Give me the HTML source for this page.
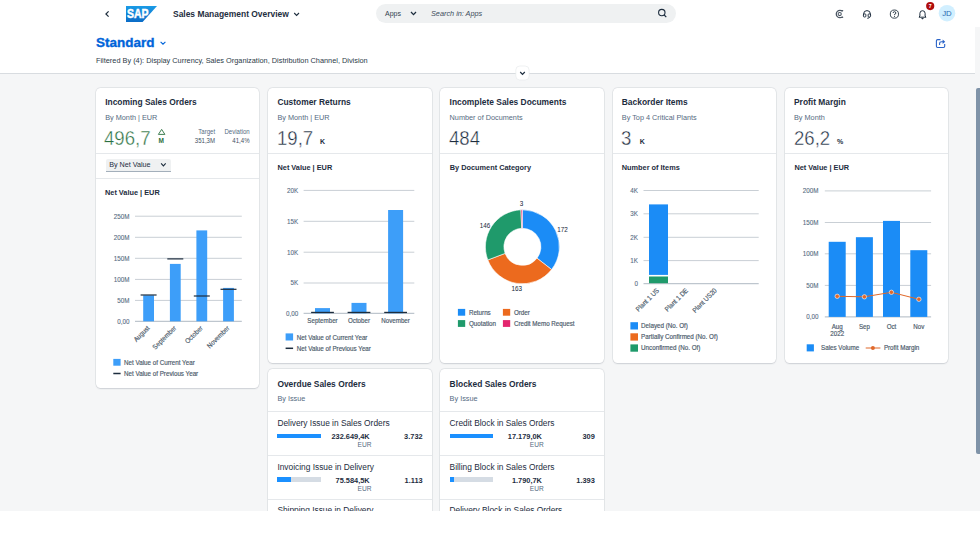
<!DOCTYPE html>
<html><head><meta charset="utf-8"><title>Sales Management Overview</title>
<style>
html,body{margin:0;padding:0;}
body{width:980px;height:551px;position:relative;overflow:hidden;background:#fff;font-family:"Liberation Sans",sans-serif;}
.t{position:absolute;line-height:0;white-space:nowrap;}
.card{position:absolute;background:#fff;border-radius:4.5px;box-shadow:0 0 0 0.5px rgba(34,53,72,0.1),0 0.5px 1.5px rgba(34,53,72,0.14);}
svg{position:absolute;left:0;top:0;overflow:visible;}
svg text{font-family:"Liberation Sans",sans-serif;}
#clip{position:absolute;left:0;top:0;width:980px;height:511px;overflow:hidden;}
</style></head><body>
<div id="clip">
<div style="position:absolute;left:0.00px;top:27.00px;width:975.00px;height:484.00px;background:#f5f6f7;"></div>
<div style="position:absolute;left:975.00px;top:27.00px;width:5.00px;height:484.00px;background:#f5f6f7;"></div>
<div style="position:absolute;left:0.00px;top:27.00px;width:975.00px;height:46.00px;background:#ffffff;"></div>
<div style="position:absolute;left:0.00px;top:73.00px;width:975.00px;height:1.00px;background:#d8dce0;"></div>
<div style="position:absolute;left:976.00px;top:88.00px;width:4.00px;height:366.00px;background:#7f93a8;border-radius:2px 0 0 2px;"></div>
<div class="card" style="left:96.00px;top:87.50px;width:163.40px;height:300.50px"></div>
<div class="card" style="left:268.20px;top:87.50px;width:163.40px;height:275.00px"></div>
<div class="card" style="left:440.40px;top:87.50px;width:163.40px;height:275.00px"></div>
<div class="card" style="left:612.60px;top:87.50px;width:163.40px;height:275.00px"></div>
<div class="card" style="left:784.80px;top:87.50px;width:163.40px;height:275.00px"></div>
<div class="card" style="left:268.20px;top:368.60px;width:163.40px;height:200.00px"></div>
<div class="card" style="left:440.40px;top:368.60px;width:163.40px;height:200.00px"></div>
<div style="position:absolute;left:96.00px;top:152.70px;width:163.40px;height:1.00px;background:#e5e8eb;"></div>
<div style="position:absolute;left:268.20px;top:152.70px;width:163.40px;height:1.00px;background:#e5e8eb;"></div>
<div style="position:absolute;left:440.40px;top:152.70px;width:163.40px;height:1.00px;background:#e5e8eb;"></div>
<div style="position:absolute;left:612.60px;top:152.70px;width:163.40px;height:1.00px;background:#e5e8eb;"></div>
<div style="position:absolute;left:784.80px;top:152.70px;width:163.40px;height:1.00px;background:#e5e8eb;"></div>
<div style="position:absolute;left:96.00px;top:177.80px;width:163.40px;height:1.00px;background:#e5e8eb;"></div>
<div style="position:absolute;left:268.20px;top:410.90px;width:163.40px;height:1.00px;background:#e5e8eb;"></div>
<div style="position:absolute;left:268.20px;top:454.80px;width:163.40px;height:1.00px;background:#e5e8eb;"></div>
<div style="position:absolute;left:268.20px;top:498.70px;width:163.40px;height:1.00px;background:#e5e8eb;"></div>
<div style="position:absolute;left:440.40px;top:410.90px;width:163.40px;height:1.00px;background:#e5e8eb;"></div>
<div style="position:absolute;left:440.40px;top:454.80px;width:163.40px;height:1.00px;background:#e5e8eb;"></div>
<div style="position:absolute;left:440.40px;top:498.70px;width:163.40px;height:1.00px;background:#e5e8eb;"></div>
<div style="position:absolute;left:376.00px;top:4.00px;width:299.50px;height:19.30px;background:#eff1f2;border-radius:9.65px;"></div>
<div class="t" style="left:173.00px;top:13.97px;font-size:8.45px;font-weight:700;color:#1d2d3e;">Sales Management Overview</div>
<div class="t" style="left:385.00px;top:13.67px;font-size:7px;font-weight:400;color:#32404f;">Apps</div>
<div class="t" style="left:431.00px;top:13.57px;font-size:7.3px;font-weight:400;color:#3d4c5c;font-style:italic;">Search in: Apps</div>
<div class="t" style="left:96.00px;top:42.62px;font-size:13.5px;font-weight:700;color:#0064d9;-webkit-text-stroke:0.35px #0064d9;">Standard</div>
<div class="t" style="left:96.00px;top:60.65px;font-size:7.35px;font-weight:400;color:#2c3a48;">Filtered By (4): Display Currency, Sales Organization, Distribution Channel, Division</div>
<div class="t" style="left:105.20px;top:102.08px;font-size:8.42px;font-weight:700;color:#1d2d3e;">Incoming Sales Orders</div>
<div class="t" style="left:105.20px;top:117.77px;font-size:7.3px;font-weight:400;color:#556b82;">By Month | EUR</div>
<div class="t" style="left:277.40px;top:102.08px;font-size:8.42px;font-weight:700;color:#1d2d3e;">Customer Returns</div>
<div class="t" style="left:277.40px;top:117.77px;font-size:7.3px;font-weight:400;color:#556b82;">By Month | EUR</div>
<div class="t" style="left:449.60px;top:102.08px;font-size:8.42px;font-weight:700;color:#1d2d3e;">Incomplete Sales Documents</div>
<div class="t" style="left:449.60px;top:117.77px;font-size:7.3px;font-weight:400;color:#556b82;">Number of Documents</div>
<div class="t" style="left:621.80px;top:102.08px;font-size:8.42px;font-weight:700;color:#1d2d3e;">Backorder Items</div>
<div class="t" style="left:621.80px;top:117.77px;font-size:7.3px;font-weight:400;color:#556b82;">By Top 4 Critical Plants</div>
<div class="t" style="left:794.00px;top:102.08px;font-size:8.42px;font-weight:700;color:#1d2d3e;">Profit Margin</div>
<div class="t" style="left:794.00px;top:117.77px;font-size:7.3px;font-weight:400;color:#556b82;">By Month</div>
<div class="t" style="left:104.10px;top:137.67px;font-size:20px;font-weight:400;color:#2a7040;-webkit-text-stroke:0.4px #fff;transform:scaleX(0.93);transform-origin:0 0;">496,7</div>
<div class="t" style="left:158.40px;top:140.95px;font-size:6.5px;font-weight:700;color:#2a7040;">M</div>
<div class="t" style="right:764.90px;top:131.91px;font-size:6.9px;font-weight:400;color:#556b82;transform:scaleX(0.88);transform-origin:100% 0;">Target</div>
<div class="t" style="right:764.90px;top:140.71px;font-size:6.9px;font-weight:400;color:#45525f;transform:scaleX(0.88);transform-origin:100% 0;">351,3M</div>
<div class="t" style="right:730.10px;top:131.91px;font-size:6.9px;font-weight:400;color:#556b82;transform:scaleX(0.88);transform-origin:100% 0;">Deviation</div>
<div class="t" style="right:730.10px;top:140.71px;font-size:6.9px;font-weight:400;color:#45525f;transform:scaleX(0.88);transform-origin:100% 0;">41,4%</div>
<div class="t" style="left:277.10px;top:137.67px;font-size:20px;font-weight:400;color:#1d2d3e;-webkit-text-stroke:0.4px #fff;transform:scaleX(0.93);transform-origin:0 0;">19,7</div>
<div class="t" style="left:320.00px;top:141.57px;font-size:7px;font-weight:700;color:#1d2d3e;">K</div>
<div class="t" style="left:449.00px;top:137.67px;font-size:20px;font-weight:400;color:#1d2d3e;-webkit-text-stroke:0.4px #fff;transform:scaleX(0.93);transform-origin:0 0;">484</div>
<div class="t" style="left:621.00px;top:137.67px;font-size:20px;font-weight:400;color:#1d2d3e;-webkit-text-stroke:0.4px #fff;transform:scaleX(0.93);transform-origin:0 0;">3</div>
<div class="t" style="left:639.70px;top:141.57px;font-size:7px;font-weight:700;color:#1d2d3e;">K</div>
<div class="t" style="left:793.60px;top:137.67px;font-size:20px;font-weight:400;color:#1d2d3e;-webkit-text-stroke:0.4px #fff;transform:scaleX(0.93);transform-origin:0 0;">26,2</div>
<div class="t" style="left:837.00px;top:141.57px;font-size:7px;font-weight:700;color:#1d2d3e;">%</div>
<div style="position:absolute;left:105.5px;top:158.6px;width:65.8px;height:12.3px;background:#eff1f2;border-bottom:1px solid #a3afbb;border-radius:2px 2px 0 0"></div>
<div class="t" style="left:109.20px;top:164.51px;font-size:7.2px;font-weight:400;color:#1d2d3e;">By Net Value</div>
<div class="t" style="left:105.00px;top:192.55px;font-size:7.35px;font-weight:700;color:#1d2d3e;">Net Value | EUR</div>
<div class="t" style="left:277.50px;top:167.85px;font-size:7.35px;font-weight:700;color:#1d2d3e;">Net Value | EUR</div>
<div class="t" style="left:449.80px;top:167.85px;font-size:7.35px;font-weight:700;color:#1d2d3e;">By Document Category</div>
<div class="t" style="left:621.80px;top:167.85px;font-size:7.35px;font-weight:700;color:#1d2d3e;">Number of Items</div>
<div class="t" style="left:794.40px;top:167.85px;font-size:7.35px;font-weight:700;color:#1d2d3e;">Net Value | EUR</div>
<div class="t" style="left:277.40px;top:384.28px;font-size:8.42px;font-weight:700;color:#1d2d3e;">Overdue Sales Orders</div>
<div class="t" style="left:277.40px;top:399.37px;font-size:7.3px;font-weight:400;color:#556b82;">By Issue</div>
<div class="t" style="left:277.40px;top:422.71px;font-size:8.35px;font-weight:400;color:#1d2d3e;">Delivery Issue in Sales Orders</div>
<div style="position:absolute;left:277.40px;top:433.60px;width:43.40px;height:4.80px;background:#d5dce4;"></div>
<div style="position:absolute;left:277.40px;top:433.60px;width:43.40px;height:4.80px;background:#1b90ff;"></div>
<div class="t" style="right:610.30px;top:436.94px;font-size:7.4px;font-weight:700;color:#1d2d3e;">232.649,4K</div>
<div class="t" style="right:608.50px;top:445.31px;font-size:6.6px;font-weight:400;color:#556b82;">EUR</div>
<div class="t" style="right:557.40px;top:436.94px;font-size:7.4px;font-weight:700;color:#1d2d3e;">3.732</div>
<div class="t" style="left:277.40px;top:466.51px;font-size:8.35px;font-weight:400;color:#1d2d3e;">Invoicing Issue in Delivery</div>
<div style="position:absolute;left:277.40px;top:477.40px;width:43.40px;height:4.80px;background:#d5dce4;"></div>
<div style="position:absolute;left:277.40px;top:477.40px;width:13.45px;height:4.80px;background:#1b90ff;"></div>
<div class="t" style="right:610.30px;top:480.74px;font-size:7.4px;font-weight:700;color:#1d2d3e;">75.584,5K</div>
<div class="t" style="right:608.50px;top:489.11px;font-size:6.6px;font-weight:400;color:#556b82;">EUR</div>
<div class="t" style="right:557.40px;top:480.74px;font-size:7.4px;font-weight:700;color:#1d2d3e;">1.113</div>
<div class="t" style="left:277.40px;top:510.31px;font-size:8.35px;font-weight:400;color:#1d2d3e;">Shipping Issue in Delivery</div>
<div style="position:absolute;left:277.40px;top:521.20px;width:43.40px;height:4.80px;background:#d5dce4;"></div>
<div style="position:absolute;left:277.40px;top:521.20px;width:8.68px;height:4.80px;background:#1b90ff;"></div>
<div class="t" style="right:610.30px;top:524.54px;font-size:7.4px;font-weight:700;color:#1d2d3e;"></div>
<div class="t" style="right:608.50px;top:532.91px;font-size:6.6px;font-weight:400;color:#556b82;">EUR</div>
<div class="t" style="right:557.40px;top:524.54px;font-size:7.4px;font-weight:700;color:#1d2d3e;"></div>
<div class="t" style="left:449.60px;top:384.28px;font-size:8.42px;font-weight:700;color:#1d2d3e;">Blocked Sales Orders</div>
<div class="t" style="left:449.60px;top:399.37px;font-size:7.3px;font-weight:400;color:#556b82;">By Issue</div>
<div class="t" style="left:449.60px;top:422.71px;font-size:8.35px;font-weight:400;color:#1d2d3e;">Credit Block in Sales Orders</div>
<div style="position:absolute;left:449.60px;top:433.60px;width:43.40px;height:4.80px;background:#d5dce4;"></div>
<div style="position:absolute;left:449.60px;top:433.60px;width:43.40px;height:4.80px;background:#1b90ff;"></div>
<div class="t" style="right:438.10px;top:436.94px;font-size:7.4px;font-weight:700;color:#1d2d3e;">17.179,0K</div>
<div class="t" style="right:436.30px;top:445.31px;font-size:6.6px;font-weight:400;color:#556b82;">EUR</div>
<div class="t" style="right:385.20px;top:436.94px;font-size:7.4px;font-weight:700;color:#1d2d3e;">309</div>
<div class="t" style="left:449.60px;top:466.51px;font-size:8.35px;font-weight:400;color:#1d2d3e;">Billing Block in Sales Orders</div>
<div style="position:absolute;left:449.60px;top:477.40px;width:43.40px;height:4.80px;background:#d5dce4;"></div>
<div style="position:absolute;left:449.60px;top:477.40px;width:4.34px;height:4.80px;background:#1b90ff;"></div>
<div class="t" style="right:438.10px;top:480.74px;font-size:7.4px;font-weight:700;color:#1d2d3e;">1.790,7K</div>
<div class="t" style="right:436.30px;top:489.11px;font-size:6.6px;font-weight:400;color:#556b82;">EUR</div>
<div class="t" style="right:385.20px;top:480.74px;font-size:7.4px;font-weight:700;color:#1d2d3e;">1.393</div>
<div class="t" style="left:449.60px;top:510.31px;font-size:8.35px;font-weight:400;color:#1d2d3e;">Delivery Block in Sales Orders</div>
<div style="position:absolute;left:449.60px;top:521.20px;width:43.40px;height:4.80px;background:#d5dce4;"></div>
<div style="position:absolute;left:449.60px;top:521.20px;width:8.68px;height:4.80px;background:#1b90ff;"></div>
<div class="t" style="right:438.10px;top:524.54px;font-size:7.4px;font-weight:700;color:#1d2d3e;"></div>
<div class="t" style="right:436.30px;top:532.91px;font-size:6.6px;font-weight:400;color:#556b82;">EUR</div>
<div class="t" style="right:385.20px;top:524.54px;font-size:7.4px;font-weight:700;color:#1d2d3e;"></div>
<svg width="980" height="511" viewBox="0 0 980 511">
<rect x="135.00" y="215.70" width="106.80" height="1" fill="#c9cfd5"/>
<text x="129.40" y="218.70" font-size="7.0" font-weight="400" fill="#556b82" stroke="#556b82" stroke-width="0.1" text-anchor="end" transform="translate(129.40 218.70) scale(0.9 1) translate(-129.40 -218.70)" >250M</text>
<rect x="135.00" y="236.80" width="106.80" height="1" fill="#c9cfd5"/>
<text x="129.40" y="239.80" font-size="7.0" font-weight="400" fill="#556b82" stroke="#556b82" stroke-width="0.1" text-anchor="end" transform="translate(129.40 239.80) scale(0.9 1) translate(-129.40 -239.80)" >200M</text>
<rect x="135.00" y="257.80" width="106.80" height="1" fill="#c9cfd5"/>
<text x="129.40" y="260.80" font-size="7.0" font-weight="400" fill="#556b82" stroke="#556b82" stroke-width="0.1" text-anchor="end" transform="translate(129.40 260.80) scale(0.9 1) translate(-129.40 -260.80)" >150M</text>
<rect x="135.00" y="278.90" width="106.80" height="1" fill="#c9cfd5"/>
<text x="129.40" y="281.90" font-size="7.0" font-weight="400" fill="#556b82" stroke="#556b82" stroke-width="0.1" text-anchor="end" transform="translate(129.40 281.90) scale(0.9 1) translate(-129.40 -281.90)" >100M</text>
<rect x="135.00" y="299.90" width="106.80" height="1" fill="#c9cfd5"/>
<text x="129.40" y="302.90" font-size="7.0" font-weight="400" fill="#556b82" stroke="#556b82" stroke-width="0.1" text-anchor="end" transform="translate(129.40 302.90) scale(0.9 1) translate(-129.40 -302.90)" >50M</text>
<rect x="135.00" y="320.80" width="106.80" height="1" fill="#aeb8c2"/>
<text x="129.40" y="323.80" font-size="7.0" font-weight="400" fill="#556b82" stroke="#556b82" stroke-width="0.1" text-anchor="end" transform="translate(129.40 323.80) scale(0.9 1) translate(-129.40 -323.80)" >0,00</text>
<rect x="143.20" y="295.30" width="10.8" height="26.00" fill="#3d9ef9"/>
<rect x="140.60" y="294.40" width="16" height="1.2" fill="#1d2d3e"/>
<rect x="169.90" y="263.90" width="10.8" height="57.40" fill="#3d9ef9"/>
<rect x="167.30" y="258.30" width="16" height="1.2" fill="#1d2d3e"/>
<rect x="196.40" y="230.40" width="10.8" height="90.90" fill="#3d9ef9"/>
<rect x="193.80" y="295.40" width="16" height="1.2" fill="#1d2d3e"/>
<rect x="223.10" y="287.90" width="10.8" height="33.40" fill="#3d9ef9"/>
<rect x="220.50" y="288.70" width="16" height="1.2" fill="#1d2d3e"/>
<text x="150.10" y="328.50" font-size="6.9" font-weight="400" fill="#4d5c6c" stroke="#4d5c6c" stroke-width="0.18" text-anchor="end" transform="rotate(-45 150.10 328.50) translate(150.10 328.50) scale(0.9 1) translate(-150.10 -328.50)" >August</text>
<text x="176.80" y="328.50" font-size="6.9" font-weight="400" fill="#4d5c6c" stroke="#4d5c6c" stroke-width="0.18" text-anchor="end" transform="rotate(-45 176.80 328.50) translate(176.80 328.50) scale(0.9 1) translate(-176.80 -328.50)" >September</text>
<text x="203.30" y="328.50" font-size="6.9" font-weight="400" fill="#4d5c6c" stroke="#4d5c6c" stroke-width="0.18" text-anchor="end" transform="rotate(-45 203.30 328.50) translate(203.30 328.50) scale(0.9 1) translate(-203.30 -328.50)" >October</text>
<text x="230.00" y="328.50" font-size="6.9" font-weight="400" fill="#4d5c6c" stroke="#4d5c6c" stroke-width="0.18" text-anchor="end" transform="rotate(-45 230.00 328.50) translate(230.00 328.50) scale(0.9 1) translate(-230.00 -328.50)" >November</text>
<rect x="113.3" y="358.9" width="7.3" height="6.8" fill="#3d9ef9"/>
<text x="124.10" y="364.90" font-size="6.8" font-weight="400" fill="#4d5c6c" stroke="#4d5c6c" stroke-width="0.18" text-anchor="start" transform="translate(124.10 364.90) scale(0.92 1) translate(-124.10 -364.90)" >Net Value of Current Year</text>
<rect x="113.3" y="372.75" width="7.3" height="1.5" fill="#1d2d3e"/>
<text x="124.10" y="376.40" font-size="6.8" font-weight="400" fill="#4d5c6c" stroke="#4d5c6c" stroke-width="0.18" text-anchor="start" transform="translate(124.10 376.40) scale(0.92 1) translate(-124.10 -376.40)" >Net Value of Previous Year</text>
<rect x="303.60" y="189.90" width="110.70" height="1" fill="#c9cfd5"/>
<text x="298.30" y="192.90" font-size="7.0" font-weight="400" fill="#556b82" stroke="#556b82" stroke-width="0.1" text-anchor="end" transform="translate(298.30 192.90) scale(0.9 1) translate(-298.30 -192.90)" >20K</text>
<rect x="303.60" y="220.80" width="110.70" height="1" fill="#c9cfd5"/>
<text x="298.30" y="223.80" font-size="7.0" font-weight="400" fill="#556b82" stroke="#556b82" stroke-width="0.1" text-anchor="end" transform="translate(298.30 223.80) scale(0.9 1) translate(-298.30 -223.80)" >15K</text>
<rect x="303.60" y="251.70" width="110.70" height="1" fill="#c9cfd5"/>
<text x="298.30" y="254.70" font-size="7.0" font-weight="400" fill="#556b82" stroke="#556b82" stroke-width="0.1" text-anchor="end" transform="translate(298.30 254.70) scale(0.9 1) translate(-298.30 -254.70)" >10K</text>
<rect x="303.60" y="282.50" width="110.70" height="1" fill="#c9cfd5"/>
<text x="298.30" y="285.50" font-size="7.0" font-weight="400" fill="#556b82" stroke="#556b82" stroke-width="0.1" text-anchor="end" transform="translate(298.30 285.50) scale(0.9 1) translate(-298.30 -285.50)" >5K</text>
<rect x="303.60" y="312.80" width="110.70" height="1" fill="#aeb8c2"/>
<text x="298.30" y="315.80" font-size="7.0" font-weight="400" fill="#556b82" stroke="#556b82" stroke-width="0.1" text-anchor="end" transform="translate(298.30 315.80) scale(0.9 1) translate(-298.30 -315.80)" >0,00</text>
<rect x="315.00" y="308.10" width="15" height="5.20" fill="#3d9ef9"/>
<rect x="311.10" y="311.80" width="22.8" height="1.3" fill="#1d2d3e"/>
<rect x="351.50" y="302.90" width="15" height="10.40" fill="#3d9ef9"/>
<rect x="347.60" y="311.80" width="22.8" height="1.3" fill="#1d2d3e"/>
<rect x="388.10" y="210.00" width="15" height="103.30" fill="#3d9ef9"/>
<rect x="384.20" y="311.80" width="22.8" height="1.3" fill="#1d2d3e"/>
<text x="322.50" y="323.20" font-size="6.9" font-weight="400" fill="#4d5c6c" stroke="#4d5c6c" stroke-width="0.18" text-anchor="middle" transform="translate(322.50 323.20) scale(0.9 1) translate(-322.50 -323.20)" >September</text>
<text x="359.00" y="323.20" font-size="6.9" font-weight="400" fill="#4d5c6c" stroke="#4d5c6c" stroke-width="0.18" text-anchor="middle" transform="translate(359.00 323.20) scale(0.9 1) translate(-359.00 -323.20)" >October</text>
<text x="395.60" y="323.20" font-size="6.9" font-weight="400" fill="#4d5c6c" stroke="#4d5c6c" stroke-width="0.18" text-anchor="middle" transform="translate(395.60 323.20) scale(0.9 1) translate(-395.60 -323.20)" >November</text>
<rect x="285.6" y="333.4" width="7.5" height="7.1" fill="#3d9ef9"/>
<text x="296.80" y="339.70" font-size="6.8" font-weight="400" fill="#4d5c6c" stroke="#4d5c6c" stroke-width="0.18" text-anchor="start" transform="translate(296.80 339.70) scale(0.92 1) translate(-296.80 -339.70)" >Net Value of Current Year</text>
<rect x="285.6" y="347.55" width="7.5" height="1.5" fill="#1d2d3e"/>
<text x="296.80" y="351.30" font-size="6.8" font-weight="400" fill="#4d5c6c" stroke="#4d5c6c" stroke-width="0.18" text-anchor="start" transform="translate(296.80 351.30) scale(0.92 1) translate(-296.80 -351.30)" >Net Value of Previous Year</text>
<path d="M522.40,209.80 A37,37 0 0 1 551.58,269.55 L536.99,258.17 A18.5,18.5 0 0 0 522.40,228.30 Z" fill="#1b8cf6" stroke="#fff" stroke-width="0.6"/>
<path d="M551.58,269.55 A37,37 0 0 1 487.82,259.95 L505.11,253.38 A18.5,18.5 0 0 0 536.99,258.17 Z" fill="#ec6a1e" stroke="#fff" stroke-width="0.6"/>
<path d="M487.82,259.95 A37,37 0 0 1 520.96,209.83 L521.68,228.31 A18.5,18.5 0 0 0 505.11,253.38 Z" fill="#1f9a6b" stroke="#fff" stroke-width="0.6"/>
<path d="M520.96,209.83 A37,37 0 0 1 522.40,209.80 L522.40,228.30 A18.5,18.5 0 0 0 521.68,228.31 Z" fill="#e3266e" stroke="#fff" stroke-width="0.6"/>
<text x="521.50" y="206.20" font-size="7.3" font-weight="400" fill="#1d2d3e" stroke="#1d2d3e" stroke-width="0.05" text-anchor="middle" transform="translate(521.50 206.20) scale(0.86 1) translate(-521.50 -206.20)" >3</text>
<text x="562.50" y="232.30" font-size="7.3" font-weight="400" fill="#1d2d3e" stroke="#1d2d3e" stroke-width="0.05" text-anchor="middle" transform="translate(562.50 232.30) scale(0.86 1) translate(-562.50 -232.30)" >172</text>
<text x="484.90" y="227.70" font-size="7.3" font-weight="400" fill="#1d2d3e" stroke="#1d2d3e" stroke-width="0.05" text-anchor="middle" transform="translate(484.90 227.70) scale(0.86 1) translate(-484.90 -227.70)" >146</text>
<text x="516.70" y="291.00" font-size="7.3" font-weight="400" fill="#1d2d3e" stroke="#1d2d3e" stroke-width="0.05" text-anchor="middle" transform="translate(516.70 291.00) scale(0.86 1) translate(-516.70 -291.00)" >163</text>
<rect x="457.9" y="308.9" width="7.3" height="6.8" fill="#1b8cf6"/>
<text x="468.90" y="314.90" font-size="6.8" font-weight="400" fill="#4d5c6c" stroke="#4d5c6c" stroke-width="0.18" text-anchor="start" transform="translate(468.90 314.90) scale(0.92 1) translate(-468.90 -314.90)" >Returns</text>
<rect x="502.9" y="308.9" width="7.3" height="6.8" fill="#ec6a1e"/>
<text x="513.90" y="314.90" font-size="6.8" font-weight="400" fill="#4d5c6c" stroke="#4d5c6c" stroke-width="0.18" text-anchor="start" transform="translate(513.90 314.90) scale(0.92 1) translate(-513.90 -314.90)" >Order</text>
<rect x="457.9" y="320.1" width="7.3" height="6.8" fill="#1f9a6b"/>
<text x="468.90" y="326.10" font-size="6.8" font-weight="400" fill="#4d5c6c" stroke="#4d5c6c" stroke-width="0.18" text-anchor="start" transform="translate(468.90 326.10) scale(0.92 1) translate(-468.90 -326.10)" >Quotation</text>
<rect x="502.9" y="320.1" width="7.3" height="6.8" fill="#e3266e"/>
<text x="513.90" y="326.10" font-size="6.8" font-weight="400" fill="#4d5c6c" stroke="#4d5c6c" stroke-width="0.18" text-anchor="start" transform="translate(513.90 326.10) scale(0.92 1) translate(-513.90 -326.10)" >Credit Memo Request</text>
<rect x="643.50" y="190.00" width="115.20" height="1" fill="#c9cfd5"/>
<text x="638.00" y="193.00" font-size="7.0" font-weight="400" fill="#556b82" stroke="#556b82" stroke-width="0.1" text-anchor="end" transform="translate(638.00 193.00) scale(0.9 1) translate(-638.00 -193.00)" >4K</text>
<rect x="643.50" y="213.30" width="115.20" height="1" fill="#c9cfd5"/>
<text x="638.00" y="216.30" font-size="7.0" font-weight="400" fill="#556b82" stroke="#556b82" stroke-width="0.1" text-anchor="end" transform="translate(638.00 216.30) scale(0.9 1) translate(-638.00 -216.30)" >3K</text>
<rect x="643.50" y="236.80" width="115.20" height="1" fill="#c9cfd5"/>
<text x="638.00" y="239.80" font-size="7.0" font-weight="400" fill="#556b82" stroke="#556b82" stroke-width="0.1" text-anchor="end" transform="translate(638.00 239.80) scale(0.9 1) translate(-638.00 -239.80)" >2K</text>
<rect x="643.50" y="260.10" width="115.20" height="1" fill="#c9cfd5"/>
<text x="638.00" y="263.10" font-size="7.0" font-weight="400" fill="#556b82" stroke="#556b82" stroke-width="0.1" text-anchor="end" transform="translate(638.00 263.10) scale(0.9 1) translate(-638.00 -263.10)" >1K</text>
<rect x="643.50" y="283.20" width="115.20" height="1" fill="#aeb8c2"/>
<text x="638.00" y="286.20" font-size="7.0" font-weight="400" fill="#556b82" stroke="#556b82" stroke-width="0.1" text-anchor="end" transform="translate(638.00 286.20) scale(0.9 1) translate(-638.00 -286.20)" >0</text>
<rect x="649" y="204.4" width="19" height="70.50" fill="#1b8cf6"/>
<rect x="649" y="276.5" width="19" height="6.70" fill="#1f9a6b"/>
<text x="659.50" y="291.00" font-size="6.9" font-weight="400" fill="#4d5c6c" stroke="#4d5c6c" stroke-width="0.18" text-anchor="end" transform="rotate(-45 659.50 291.00) translate(659.50 291.00) scale(0.9 1) translate(-659.50 -291.00)" >Plant 1 US</text>
<text x="688.50" y="291.00" font-size="6.9" font-weight="400" fill="#4d5c6c" stroke="#4d5c6c" stroke-width="0.18" text-anchor="end" transform="rotate(-45 688.50 291.00) translate(688.50 291.00) scale(0.9 1) translate(-688.50 -291.00)" >Plant 1 DE</text>
<text x="717.30" y="291.00" font-size="6.9" font-weight="400" fill="#4d5c6c" stroke="#4d5c6c" stroke-width="0.18" text-anchor="end" transform="rotate(-45 717.30 291.00) translate(717.30 291.00) scale(0.9 1) translate(-717.30 -291.00)" >Plant US20</text>
<rect x="630.4" y="322.20" width="7.6" height="7.3" fill="#1b8cf6"/>
<text x="641.10" y="328.20" font-size="6.8" font-weight="400" fill="#4d5c6c" stroke="#4d5c6c" stroke-width="0.18" text-anchor="start" transform="translate(641.10 328.20) scale(0.92 1) translate(-641.10 -328.20)" >Delayed (No. Of)</text>
<rect x="630.4" y="333.30" width="7.6" height="7.3" fill="#ec6a1e"/>
<text x="641.10" y="339.30" font-size="6.8" font-weight="400" fill="#4d5c6c" stroke="#4d5c6c" stroke-width="0.18" text-anchor="start" transform="translate(641.10 339.30) scale(0.92 1) translate(-641.10 -339.30)" >Partially Confirmed (No. Of)</text>
<rect x="630.4" y="344.40" width="7.6" height="7.3" fill="#1f9a6b"/>
<text x="641.10" y="350.40" font-size="6.8" font-weight="400" fill="#4d5c6c" stroke="#4d5c6c" stroke-width="0.18" text-anchor="start" transform="translate(641.10 350.40) scale(0.92 1) translate(-641.10 -350.40)" >Unconfirmed (No. Of)</text>
<rect x="824.80" y="190.40" width="106.30" height="1" fill="#c9cfd5"/>
<text x="818.60" y="193.40" font-size="7.0" font-weight="400" fill="#556b82" stroke="#556b82" stroke-width="0.1" text-anchor="end" transform="translate(818.60 193.40) scale(0.9 1) translate(-818.60 -193.40)" >200M</text>
<rect x="824.80" y="222.00" width="106.30" height="1" fill="#c9cfd5"/>
<text x="818.60" y="225.00" font-size="7.0" font-weight="400" fill="#556b82" stroke="#556b82" stroke-width="0.1" text-anchor="end" transform="translate(818.60 225.00) scale(0.9 1) translate(-818.60 -225.00)" >150M</text>
<rect x="824.80" y="253.30" width="106.30" height="1" fill="#c9cfd5"/>
<text x="818.60" y="256.30" font-size="7.0" font-weight="400" fill="#556b82" stroke="#556b82" stroke-width="0.1" text-anchor="end" transform="translate(818.60 256.30) scale(0.9 1) translate(-818.60 -256.30)" >100M</text>
<rect x="824.80" y="284.90" width="106.30" height="1" fill="#c9cfd5"/>
<text x="818.60" y="287.90" font-size="7.0" font-weight="400" fill="#556b82" stroke="#556b82" stroke-width="0.1" text-anchor="end" transform="translate(818.60 287.90) scale(0.9 1) translate(-818.60 -287.90)" >50M</text>
<rect x="824.80" y="316.40" width="106.30" height="1" fill="#aeb8c2"/>
<text x="818.60" y="319.40" font-size="7.0" font-weight="400" fill="#556b82" stroke="#556b82" stroke-width="0.1" text-anchor="end" transform="translate(818.60 319.40) scale(0.9 1) translate(-818.60 -319.40)" >0,00</text>
<rect x="828.70" y="241.80" width="17" height="75.10" fill="#1b8cf6"/>
<rect x="855.90" y="237.20" width="17" height="79.70" fill="#1b8cf6"/>
<rect x="883.00" y="220.90" width="17" height="96.00" fill="#1b8cf6"/>
<rect x="910.30" y="250.20" width="17" height="66.70" fill="#1b8cf6"/>
<polyline points="837.2,296.3 864.4,296.8 891.4,292.3 918.9,299.3" fill="none" stroke="#e0682a" stroke-width="1"/>
<circle cx="837.2" cy="296.3" r="2.2" fill="#e0682a" stroke="#fff" stroke-width="0.6"/>
<circle cx="864.4" cy="296.8" r="2.2" fill="#e0682a" stroke="#fff" stroke-width="0.6"/>
<circle cx="891.4" cy="292.3" r="2.2" fill="#e0682a" stroke="#fff" stroke-width="0.6"/>
<circle cx="918.9" cy="299.3" r="2.2" fill="#e0682a" stroke="#fff" stroke-width="0.6"/>
<text x="837.20" y="329.40" font-size="6.9" font-weight="400" fill="#4d5c6c" stroke="#4d5c6c" stroke-width="0.18" text-anchor="middle" transform="translate(837.20 329.40) scale(0.9 1) translate(-837.20 -329.40)" >Aug</text>
<text x="864.40" y="329.40" font-size="6.9" font-weight="400" fill="#4d5c6c" stroke="#4d5c6c" stroke-width="0.18" text-anchor="middle" transform="translate(864.40 329.40) scale(0.9 1) translate(-864.40 -329.40)" >Sep</text>
<text x="891.50" y="329.40" font-size="6.9" font-weight="400" fill="#4d5c6c" stroke="#4d5c6c" stroke-width="0.18" text-anchor="middle" transform="translate(891.50 329.40) scale(0.9 1) translate(-891.50 -329.40)" >Oct</text>
<text x="918.80" y="329.40" font-size="6.9" font-weight="400" fill="#4d5c6c" stroke="#4d5c6c" stroke-width="0.18" text-anchor="middle" transform="translate(918.80 329.40) scale(0.9 1) translate(-918.80 -329.40)" >Nov</text>
<text x="837.20" y="336.20" font-size="6.9" font-weight="400" fill="#4d5c6c" stroke="#4d5c6c" stroke-width="0.18" text-anchor="middle" transform="translate(837.20 336.20) scale(0.9 1) translate(-837.20 -336.20)" >2022</text>
<rect x="806.7" y="344.3" width="7.2" height="7.1" fill="#1b8cf6"/>
<text x="821.00" y="350.20" font-size="6.8" font-weight="400" fill="#4d5c6c" stroke="#4d5c6c" stroke-width="0.18" text-anchor="start" transform="translate(821.00 350.20) scale(0.92 1) translate(-821.00 -350.20)" >Sales Volume</text>
<rect x="865.7" y="347.5" width="14.7" height="1" fill="#e0682a"/>
<circle cx="872.9" cy="348" r="2" fill="#e0682a"/>
<text x="883.90" y="350.20" font-size="6.8" font-weight="400" fill="#4d5c6c" stroke="#4d5c6c" stroke-width="0.18" text-anchor="start" transform="translate(883.90 350.20) scale(0.92 1) translate(-883.90 -350.20)" >Profit Margin</text>
<path d="M108.6,11.3 L105.9,14 L108.6,16.7" fill="none" stroke="#1d2d3e" stroke-width="1.2"/>
<defs><linearGradient id="sapg" x1="0" y1="0" x2="0" y2="1"><stop offset="0" stop-color="#1a9be6"/><stop offset="1" stop-color="#0b6cc7"/></linearGradient></defs>
<polygon points="126,6 157,6 142.6,22 126,22" fill="url(#sapg)"/>
<text x="127" y="18.4" font-size="12.5" font-weight="700" fill="#fff" stroke="#fff" stroke-width="0.5" textLength="21.5" lengthAdjust="spacingAndGlyphs">SAP</text>
<path d="M294.2,13 L296.6,15.4 L299,13" fill="none" stroke="#1d2d3e" stroke-width="1.1"/>
<path d="M411,12 L413.5,14.6 L416,12" fill="none" stroke="#1d2d3e" stroke-width="1.3"/>
<circle cx="661.8" cy="12.6" r="3.2" fill="none" stroke="#1d2d3e" stroke-width="1.1"/>
<path d="M664.2,15 L666.3,17.1" stroke="#1d2d3e" stroke-width="1.2"/>
<path d="M842.6,11.4 A3.7,3.7 0 1 0 842.6,16.6" fill="none" stroke="#4a5562" stroke-width="1.25"/>
<path d="M841.2,10.6 L843.2,10.6 M841.2,17.4 L843.2,17.4" fill="none" stroke="#4a5562" stroke-width="1"/>
<circle cx="839.7" cy="14" r="1.6" fill="none" stroke="#4a5562" stroke-width="1.05"/>
<path d="M863.6,15.2 L863.6,14 A3.4,3.4 0 0 1 870.4,14 L870.4,15.2" fill="none" stroke="#1d2d3e" stroke-width="1"/>
<rect x="863.4" y="13.9" width="2.5" height="3.1" rx="0.9" fill="none" stroke="#1d2d3e" stroke-width="0.95"/><rect x="868.1" y="13.9" width="2.5" height="3.1" rx="0.9" fill="none" stroke="#1d2d3e" stroke-width="0.95"/>
<path d="M869.6,17.1 Q869.3,18.3 867.3,18.3" fill="none" stroke="#1d2d3e" stroke-width="1"/>
<circle cx="894.4" cy="14.1" r="4.1" fill="none" stroke="#2d3b48" stroke-width="0.95"/>
<path d="M893.15,13.0 A1.35,1.35 0 1 1 894.5,14.35 L894.5,15.2" fill="none" stroke="#2d3b48" stroke-width="0.95"/>
<circle cx="894.5" cy="16.55" r="0.55" fill="#2d3b48"/>
<path d="M919,17.2 L919.9,16 L919.9,13.3 A2.6,2.6 0 0 1 925.1,13.3 L925.1,16 L926,17.2 Z" fill="none" stroke="#1d2d3e" stroke-width="1" stroke-linejoin="round"/>
<path d="M921.6,18.1 A0.9,0.9 0 0 0 923.4,18.1" fill="#1d2d3e" stroke="#1d2d3e" stroke-width="0.6"/>
<circle cx="930.2" cy="6.1" r="4.1" fill="#b00d0d"/>
<text x="930.2" y="8" font-size="5.2" font-weight="700" fill="#fff" text-anchor="middle">7</text>
<circle cx="947" cy="13.2" r="8.3" fill="#d1efff"/>
<text x="946.9" y="16" font-size="7.8" fill="#2a6ab0" text-anchor="middle">JD</text>
<path d="M160.6,41.8 L163,44.2 L165.4,41.8" fill="none" stroke="#0064d9" stroke-width="1.1"/>
<path d="M940.5,39.6 L937.6,39.6 Q936.4,39.6 936.4,40.8 L936.4,46.3 Q936.4,47.5 937.6,47.5 L943.5,47.5 Q944.7,47.5 944.7,46.3 L944.7,44" fill="none" stroke="#2a63c8" stroke-width="1.1"/>
<path d="M939.6,45 L939.6,43.6 Q939.6,41.7 941.6,41.7 L943.4,41.7" fill="none" stroke="#2a63c8" stroke-width="1.1"/>
<path d="M942.6,39.4 L945.2,41.7 L942.6,44 Z" fill="#2a63c8"/>
<rect x="515.8" y="66" width="13.3" height="14" rx="4" fill="#fff" stroke="#e4e7ea" stroke-width="0.6"/>
<path d="M520.2,72 L522.5,74.4 L524.8,72" fill="none" stroke="#1d2d3e" stroke-width="1.2"/>
<path d="M161.65,129.4 L164.9,134.4 L158.4,134.4 Z" fill="none" stroke="#2a7040" stroke-width="0.9"/>
<path d="M161.1,163.4 L163.4,165.9 L165.7,163.4" fill="none" stroke="#1d2d3e" stroke-width="1.1"/>
</svg>
</div>
</body></html>
